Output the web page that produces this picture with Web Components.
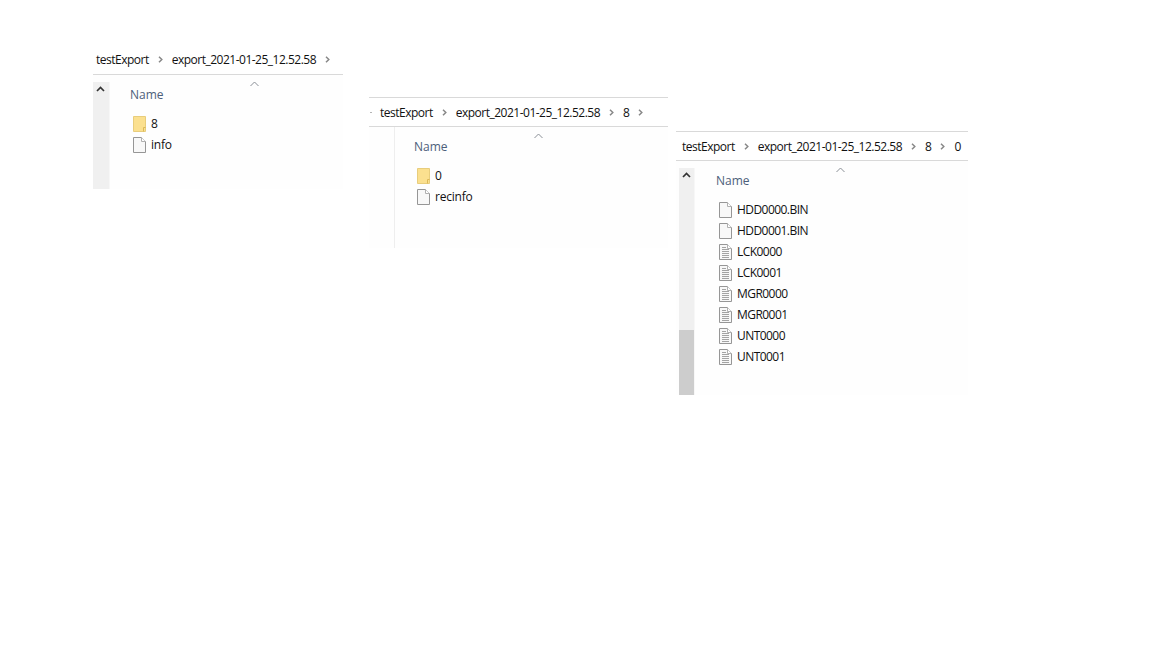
<!DOCTYPE html>
<html>
<head>
<meta charset="utf-8">
<style>
  html, body { margin: 0; height: 100%; background: #fff; }
  body { position: relative; overflow: hidden; font-family: "Open Sans", "Noto Sans", sans-serif; }
</style>
</head>
<body>

<template id="file-row-tpl">
  <style>
    :host { display: flex; align-items: center; gap: 5px; height: 21px; font-size: 12px; color: #111; letter-spacing: var(--row-track, -0.2px); }
    svg { display: block; flex: none; }
  </style>
  <svg id="icon" width="13" height="16" viewBox="0 0 13 16"></svg>
  <slot></slot>
</template>

<template id="path-bar-tpl">
  <style>
    :host { display: flex; align-items: center; font-size: 12px; color: #111; letter-spacing: -0.5px; white-space: nowrap; }
    svg { display: block; flex: none; margin: 0 9px 0 9px; }
  </style>
  <div id="crumbs" style="display:contents"></div>
</template>

<template id="explorer-window-tpl">
  <style>
    :host {
      position: absolute;
      left: var(--x);
      top: var(--y);
      width: var(--w);
      height: var(--h);
      display: flex;
      flex-direction: column;
      background: #fefefe;
    }
    header {
      flex: none;
      height: 28px;
      box-sizing: content-box;
      display: flex;
      align-items: center;
      padding-left: var(--crumb-pad, 3px);
      border-top: var(--top-line, 0 solid transparent);
      border-bottom: 1px solid #d9d9d9;
      background: #fff;
    }
    /* leftover of a scrolled-away crumb, only the middle window has it */
    header::before {
      content: "";
      width: var(--tick, 0);
      height: 1px;
      margin-right: var(--tick-gap, 0);
      background: #b5b5b5;
    }
    path-bar { margin-bottom: var(--crumb-lift, 0); }
    .body { flex: 1; display: flex; min-height: 0; padding-top: var(--body-top, 7px); }
    .rail {
      flex: none;
      width: var(--rail-w, 16px);
      margin-left: var(--rail-x, 0);
      display: flex;
      flex-direction: column;
      background: var(--rail-bg, #f0f0f0);
      border-right: var(--rail-line, 1px solid #f7f7f7);
    }
    .rail svg { display: block; margin: 4px 0 0 3px; }
    .rail .space { flex: 1; }
    .rail .thumb { height: var(--thumb, 0); background: #cdcdcd; }
    .content { flex: 1; padding: var(--content-top, 0) 0 0 var(--content-pad, 20px); min-width: 0; }
    .head { display: flex; height: 25px; font-size: 12px; color: #4c607a; }
    .head span { width: 120px; padding-top: 4px; }
    .head svg { display: block; margin-top: -1px; }
    .rows { margin: 6px 0 0 3px; }
  </style>
  <header><path-bar id="bar"></path-bar></header>
  <div class="body">
    <div class="rail">
      <svg id="up" width="9" height="6" viewBox="0 0 9 6"><path d="M1 5 4.5 1.5 8 5" fill="none" stroke="#333" stroke-width="1.7"/></svg>
      <div class="space"></div>
      <div class="thumb"></div>
    </div>
    <div class="content">
      <div class="head">
        <span>Name</span>
        <svg width="9" height="6" viewBox="0 0 9 6"><path d="M.5 5 4.5 1 8.5 5" fill="none" stroke="#8a8f96" stroke-width="1"/></svg>
      </div>
      <div class="rows"><slot></slot></div>
    </div>
  </div>
</template>

<script>
  const ICONS = {
    folder: `<path d="M.5.5h12v15H.5z" fill="#fbe08f" stroke="#e8cd7c"/><path d="M10.5 15.5v-4h2" fill="none" stroke="#dcb958"/>`,
    file: `<path d="M.5.5h8l4 4v11H.5z" fill="#f8f8f8" stroke="#969696"/><path d="M8.5.5v4h4" fill="#fff" stroke="#b0b0b0"/>`,
    text: `<path d="M.5.5h8l4 4v11H.5z" fill="#f8f8f8" stroke="#969696"/><path d="M8.5.5v4h4" fill="#fff" stroke="#b0b0b0"/><path d="M3 3.5h4M3 5.5h7M3 7.5h7M3 9.5h7M3 11.5h7M3 13.5h7" stroke="#a3a3a3"/>`,
  };

  const CHEVRON = `<svg width="5" height="7" viewBox="0 0 5 7"><path d="M1 .8 3.8 3.5 1 6.2" fill="none" stroke="#888" stroke-width="1.5"/></svg>`;

  class FileRow extends HTMLElement {
    constructor() {
      super();
      this.attachShadow({ mode: "open" });
      this.shadowRoot.append(document.getElementById("file-row-tpl").content.cloneNode(true));
    }
    connectedCallback() {
      this.shadowRoot.getElementById("icon").innerHTML = ICONS[this.getAttribute("icon") || "file"];
    }
  }
  customElements.define("file-row", FileRow);

  class PathBar extends HTMLElement {
    static get observedAttributes() {
      return ["path", "trailing"];
    }
    constructor() {
      super();
      this.attachShadow({ mode: "open" });
      this.shadowRoot.append(document.getElementById("path-bar-tpl").content.cloneNode(true));
    }
    attributeChangedCallback() {
      this.render();
    }
    connectedCallback() {
      this.render();
    }
    // trailing = draw a chevron after the last crumb too
    render() {
      const parts = (this.getAttribute("path") || "").split("/");
      const trailing = this.hasAttribute("trailing");
      this.shadowRoot.getElementById("crumbs").innerHTML = parts
        .map((p, i) => `<span>${p}</span>${i < parts.length - 1 || trailing ? CHEVRON : ""}`)
        .join("");
    }
  }
  customElements.define("path-bar", PathBar);

  class ExplorerWindow extends HTMLElement {
    constructor() {
      super();
      this.attachShadow({ mode: "open" });
      this.shadowRoot.append(document.getElementById("explorer-window-tpl").content.cloneNode(true));
    }
    connectedCallback() {
      const bar = this.shadowRoot.getElementById("bar");
      bar.setAttribute("path", this.getAttribute("path"));
      if (this.hasAttribute("trailing")) bar.setAttribute("trailing", "");
      if (this.hasAttribute("no-arrow")) this.shadowRoot.getElementById("up").style.visibility = "hidden";
    }
  }
  customElements.define("explorer-window", ExplorerWindow);
</script>

<explorer-window path="testExport/export_2021-01-25_12.52.58" trailing
  style="--x:93px;--y:46px;--w:250px;--h:143px;--crumb-lift:2px">
  <file-row icon="folder">8</file-row>
  <file-row>info</file-row>
</explorer-window>

<explorer-window path="testExport/export_2021-01-25_12.52.58/8" trailing no-arrow
  style="--x:369px;--y:97px;--w:299px;--h:151px;--top-line:1px solid #d9d9d9;--crumb-pad:1px;--tick:2px;--tick-gap:8px;--rail-w:25px;--rail-bg:#fefefe;--rail-line:1px solid #eeeeee;--body-top:0px;--content-top:7px;--content-pad:19px">
  <file-row icon="folder">0</file-row>
  <file-row>recinfo</file-row>
</explorer-window>

<explorer-window path="testExport/export_2021-01-25_12.52.58/8/0"
  style="--x:676px;--y:131px;--w:292px;--h:264px;--top-line:1px solid #d9d9d9;--crumb-pad:6px;--rail-x:3px;--rail-w:15px;--thumb:65px;--content-pad:21px;--row-track:-0.55px">
  <file-row>HDD0000.BIN</file-row>
  <file-row>HDD0001.BIN</file-row>
  <file-row icon="text">LCK0000</file-row>
  <file-row icon="text">LCK0001</file-row>
  <file-row icon="text">MGR0000</file-row>
  <file-row icon="text">MGR0001</file-row>
  <file-row icon="text">UNT0000</file-row>
  <file-row icon="text">UNT0001</file-row>
</explorer-window>

</body>
</html>
